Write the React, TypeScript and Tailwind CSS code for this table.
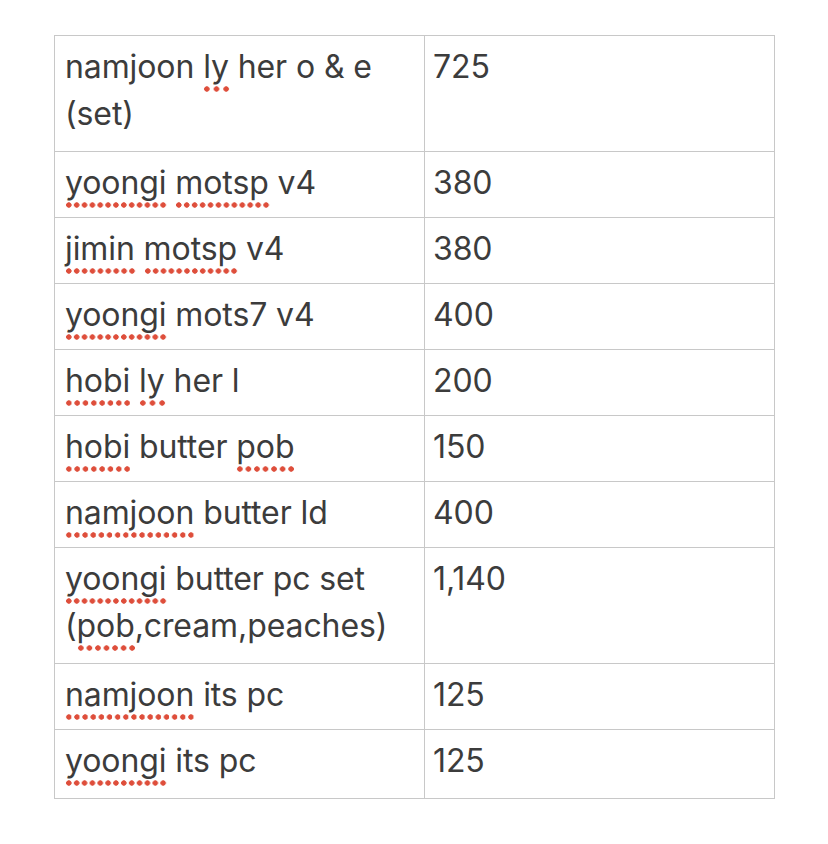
import React from "react";

const Sp = ({ children }: { children: React.ReactNode }) => (
  <span className="relative">
    {children}
    <span className="absolute left-0 right-[-1px] top-[calc(100%+0px)] h-[6px] bg-[radial-gradient(circle,#de4e3b_2.4px,transparent_3px)] bg-[length:7.7px_6px] bg-repeat-space" />
  </span>
);

const rows: { left: React.ReactNode; right: string; h: string }[] = [
  { left: <>namjoon <Sp>ly</Sp> her o &amp; e (set)</>, right: "725", h: "h-[116px]" },
  { left: <><Sp>yoongi</Sp> <Sp>motsp</Sp> v4</>, right: "380", h: "h-[66px]" },
  { left: <><Sp>jimin</Sp> <Sp>motsp</Sp> v4</>, right: "380", h: "h-[66px]" },
  { left: <><Sp>yoongi</Sp> mots7 v4</>, right: "400", h: "h-[66px]" },
  { left: <><Sp>hobi</Sp> <Sp>ly</Sp> her l</>, right: "200", h: "h-[66px]" },
  { left: <><Sp>hobi</Sp> butter <Sp>pob</Sp></>, right: "150", h: "h-[66px]" },
  { left: <><Sp>namjoon</Sp> butter ld</>, right: "400", h: "h-[66px]" },
  { left: <><Sp>yoongi</Sp> butter pc set (<Sp>pob</Sp>,cream,peaches)</>, right: "1,140", h: "h-[116px]" },
  { left: <><Sp>namjoon</Sp> its pc</>, right: "125", h: "h-[66px]" },
  { left: <><Sp>yoongi</Sp> its pc</>, right: "125", h: "h-[69px]" },
];

export default function App() {
  return (
    <div className="w-[828px] h-[844px] bg-white pt-[35px] pl-[54px] font-['Inter',sans-serif] text-[#3c3c3c]">
      <table className="border-collapse w-[720px] table-fixed">
        <colgroup>
          <col className="w-[370px]" />
          <col className="w-[350px]" />
        </colgroup>
        <tbody>
          {rows.map((r, i) => (
            <tr key={i} className={r.h}>
              <td className="border border-[#c8c8c8] align-top pl-[10px] pr-[4px] pt-[7px] text-[32px] leading-[47px] tracking-[-0.1px]">
                {r.left}
              </td>
              <td className="border border-[#c8c8c8] align-top pl-[8px] pr-[6px] pt-[7px] text-[32px] leading-[47px] tracking-[-0.1px]">
                {r.right}
              </td>
            </tr>
          ))}
        </tbody>
      </table>
    </div>
  );
}
